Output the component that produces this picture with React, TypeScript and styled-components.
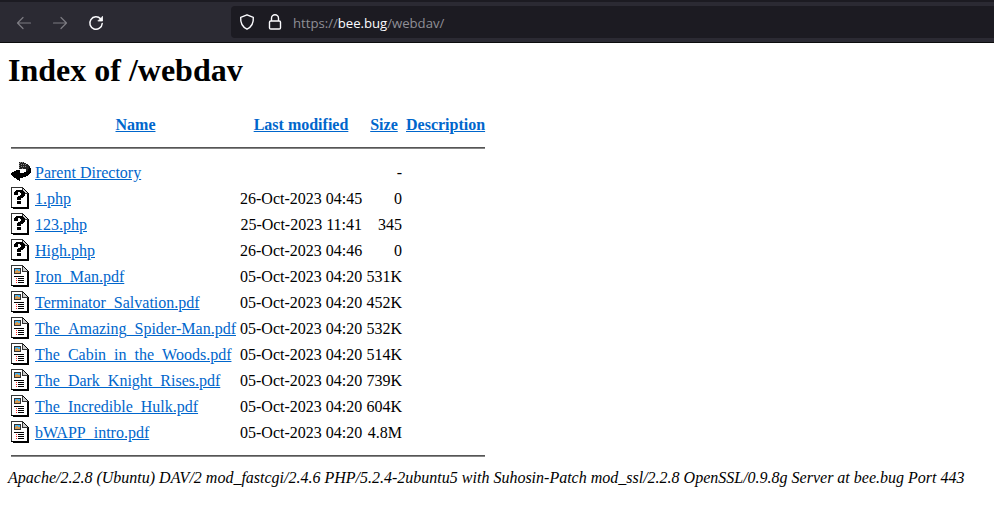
import React from 'react';
import styled, { createGlobalStyle } from 'styled-components';

const Global = createGlobalStyle`
  body { margin: 0; background: #fff; color: #000; font: 16px/18px "Liberation Serif", "Times New Roman", serif; }
`;
const Toolbar = styled.header`
  box-sizing: border-box;
  display: flex;
  align-items: center;
  height: 43px;
  padding-left: 16px;
  background: #2b2a33;
  border-top: 2px solid #1c1b22;
  border-bottom: 1px solid #0c0c0d;
`;
const NavIcon = styled.svg<{ $dim?: boolean }>`
  width: 16px;
  height: 16px;
  margin-right: 20px;
  margin-top: 1px;
  fill: none;
  stroke: ${(p) => (p.$dim ? '#7c7b82' : '#fbfbfe')};
  stroke-width: ${(p) => (p.$dim ? 1.2 : 1.5)};
  stroke-linecap: round;
  stroke-linejoin: round;
`;
const AddressBar = styled.div`
  display: flex;
  flex: 1;
  align-items: center;
  height: 32px;
  margin-left: 107px;
  padding-left: 8px;
  background: #1c1b22;
  border-radius: 4px 0 0 4px;
`;
const BarIcon = styled.svg`
  width: 16px;
  height: 16px;
  margin-right: 12px;
  fill: none;
  stroke: #fbfbfe;
  stroke-width: 1.4;
  stroke-linejoin: round;
`;
const Url = styled.span`
  margin: 2px 0 0 -2px;
  color: #8f8f96;
  font: 13.2px/20px "Open Sans", sans-serif;
  letter-spacing: -0.03px;
  white-space: nowrap;
`;
const Host = styled.span`
  color: #fbfbfe;
`;
const Page = styled.main`
  padding: 9px 8px 0;
`;
const Title = styled.h1`
  margin: 0;
  font-size: 32px;
  line-height: 37px;
`;
const Listing = styled.section`
  width: 474px;
  margin: 27px 0 0 3px;
`;
const Row = styled.div`
  display: grid;
  grid-template-columns: 20px 201px 122px 36px 79px;
  column-gap: 4px;
  align-items: center;
  height: 26px;
  line-height: 20px;
  white-space: nowrap;
`;
const HeadRow = styled(Row)`
  height: 18px;
  margin-bottom: 13px;
  line-height: 18px;
  font-weight: 700;
  text-align: center;
`;
const Rule = styled.hr`
  height: 2px;
  margin: 0;
  border: 0;
  background: linear-gradient(#555 50%, #868686 50%);
`;
const Entries = styled.div`
  padding: 10px 0;
`;
const Link = styled.a`
  color: #0066cc;
  text-decoration: underline;
  cursor: pointer;
`;
const Cell = styled.span<{ $right?: boolean }>`
  padding-top: 2px;
  text-align: ${(p) => (p.$right ? 'right' : 'left')};
`;
const FileIcon = styled.svg`
  display: block;
  width: 20px;
  height: 22px;
`;
const Signature = styled.address`
  margin-top: 12px;
  white-space: nowrap;
`;

type Kind = 'back' | 'unknown' | 'layout';

const Sheet = () => (
  <>
    <path fill="#fff" d="M1 1H11L17 7V20H1z" />
    <path fill="#333" d="M0 0H12V1H1V20H0zM11 0H12V7H11zM12 6H17V7H12z" />
    <path fill="#000" d="M12 1h1v1h-1zM13 2h1v1h-1zM14 3h1v1h-1zM15 4h1v1h-1zM16 5h1v1h-1zM17 6h1V22H2V21H16V7h1zM0 20H17V21H0z" />
    <path fill="#ccc" d="M12 2h1v1h1v1h1v1h1v1h-4z" />
  </>
);

const Glyph = ({ kind }: { kind: Kind }) => (
  <FileIcon viewBox="0 0 20 22" shapeRendering="crispEdges">
    {kind === 'back' && (
      <>
        <path fill="#222" d="M8 1h5v1h2v1h2v1h1v1h1v5h-4V8H8z" />
        <path fill="#888" d="M9 1h1v1H9zM11 1h1v1h-1zM8 2h1v1H8zM10 3h1v1h-1zM12 3h1v1h-1zM8 4h1v1H8zM14 3h1v1h-1zM10 5h1v1h-1zM12 5h1v1h-1zM14 5h1v1h-1zM8 6h1v1H8zM11 7h1v1h-1z" />
        <path fill="#000" d="M18 6h1v1h1v5h-1v1h-1v1h-1v1h-2v1h-3v1H9v3H8v-1H6v-1H5v-1H3v-1H2v-1H1v-1H0v-2h1v-1h2v-1h2v-1h2V9h2v3h4v-1h2v-1h2V8h1z" />
      </>
    )}
    {kind === 'unknown' && (
      <>
        <Sheet />
        <path fill="#000" d="M5 3h7v1h1v1h1v4h-1v1h-1v1h-2v2H6v-3h1V9h2V8h1V6H9V5H7v3H3V5h1V4h1zM6 14h4v3H6z" />
      </>
    )}
    {kind === 'layout' && (
      <>
        <Sheet />
        <path fill="#333" d="M3 3h7v6H3z" />
        <path fill="#4bb4f0" d="M4 4h5v2H4z" />
        <path fill="#d69a50" d="M4 6h1v-1h2v1h2v2H4z" />
        <path fill="#000" d="M3 11h10v1H3zM7 13h6v1H7zM7 15h6v1H7zM7 17h6v1H7z" />
        <path fill="#f22" d="M5 13h1v1H5zM5 15h1v1H5zM5 17h1v1H5z" />
      </>
    )}
  </FileIcon>
);

const files: [Kind, string, string, string][] = [
  ['back', 'Parent Directory', '', '-'],
  ['unknown', '1.php', '26-Oct-2023 04:45', '0'],
  ['unknown', '123.php', '25-Oct-2023 11:41', '345'],
  ['unknown', 'High.php', '26-Oct-2023 04:46', '0'],
  ['layout', 'Iron_Man.pdf', '05-Oct-2023 04:20', '531K'],
  ['layout', 'Terminator_Salvation.pdf', '05-Oct-2023 04:20', '452K'],
  ['layout', 'The_Amazing_Spider-Man.pdf', '05-Oct-2023 04:20', '532K'],
  ['layout', 'The_Cabin_in_the_Woods.pdf', '05-Oct-2023 04:20', '514K'],
  ['layout', 'The_Dark_Knight_Rises.pdf', '05-Oct-2023 04:20', '739K'],
  ['layout', 'The_Incredible_Hulk.pdf', '05-Oct-2023 04:20', '604K'],
  ['layout', 'bWAPP_intro.pdf', '05-Oct-2023 04:20', '4.8M'],
];

export default function App() {
  return (
    <>
      <Global />
      <Toolbar>
        <NavIcon $dim viewBox="0 0 16 16"><path d="M14.5 8H1.5M7 2.5L1.5 8L7 13.5" /></NavIcon>
        <NavIcon $dim viewBox="0 0 16 16"><path d="M1.5 8H14.5M9 2.5L14.5 8L9 13.5" /></NavIcon>
        <NavIcon viewBox="0 0 16 16">
          <path d="M12.7 4A6.2 6.2 0 1 0 14.2 8.5" />
          <path d="M14.5 1.7V6H10.2z" fill="#fbfbfe" strokeWidth=".8" />
        </NavIcon>
        <AddressBar>
          <BarIcon viewBox="0 0 16 16"><path d="M8 .8L14.3 3.3C14.7 8.5 12.9 12.8 8 15.2C3.1 12.8 1.3 8.5 1.7 3.3z" /></BarIcon>
          <BarIcon viewBox="0 0 16 16"><rect x="2.5" y="7" width="11" height="8" rx="1.3" /><path d="M4.5 7V4.2a3.5 3.5 0 0 1 7 0V7" /></BarIcon>
          <Url>https://<Host>bee.bug</Host>/webdav/</Url>
        </AddressBar>
      </Toolbar>
      <Page>
        <Title>Index of /webdav</Title>
        <Listing>
          <HeadRow>
            <span />
            <Link>Name</Link>
            <Link>Last modified</Link>
            <Link>Size</Link>
            <Link>Description</Link>
          </HeadRow>
          <Rule />
          <Entries>
            {files.map(([kind, name, date, size]) => (
              <Row key={name}>
                <Glyph kind={kind} />
                <Cell><Link>{name}</Link></Cell>
                <Cell $right>{date}</Cell>
                <Cell $right>{size}</Cell>
              </Row>
            ))}
          </Entries>
          <Rule />
        </Listing>
        <Signature>Apache/2.2.8 (Ubuntu) DAV/2 mod_fastcgi/2.4.6 PHP/5.2.4-2ubuntu5 with Suhosin-Patch mod_ssl/2.2.8 OpenSSL/0.9.8g Server at bee.bug Port 443</Signature>
      </Page>
    </>
  );
}
